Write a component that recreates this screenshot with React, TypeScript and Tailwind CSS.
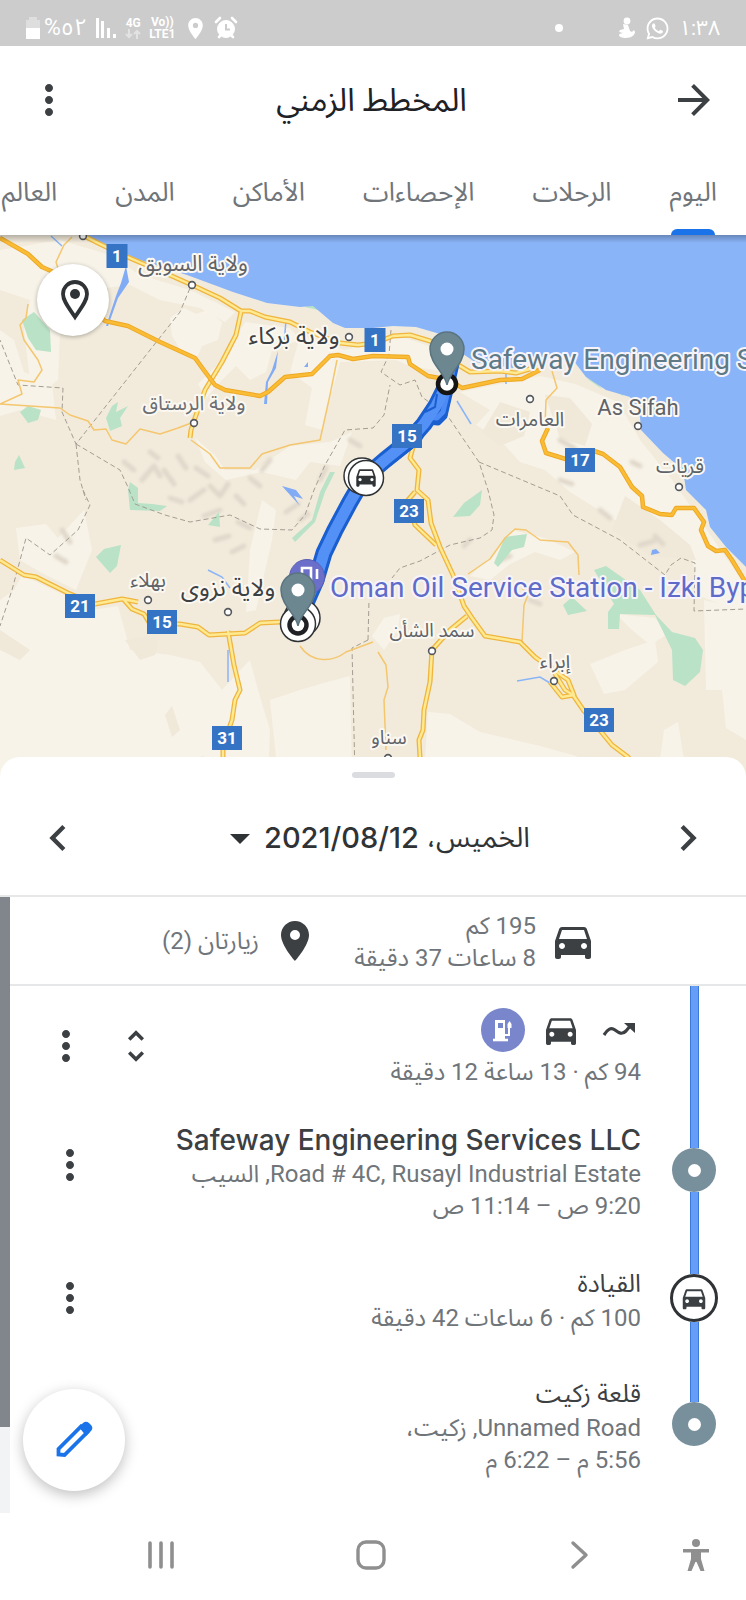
import React from 'react';
import {
  MdMoreVert, MdArrowForward, MdArrowDropDown, MdChevronLeft, MdChevronRight,
  MdDirectionsCar, MdPlace, MdUnfoldMore,
} from 'react-icons/md';
import { FaWhatsapp } from 'react-icons/fa';

const SANS = "font-['Roboto','Noto_Sans_Arabic','Noto_Sans','DejaVu_Sans',sans-serif]";

function StatusBar() {
  return (
    <div dir="ltr" className="flex h-[46px] items-center justify-between bg-[#cccccc] pl-[25px] pr-[26px] pt-[10px] text-white">
      <div className="flex items-center gap-[8px]">
        <div className="flex items-center gap-[3px]">
          <svg width="16" height="24" viewBox="0 0 16 24">
            <path d="M4 1h8v3h3v8H1V4h3z" fill="#dedede" />
            <path d="M1 12h14v11H1z" fill="#fff" />
          </svg>
          <bdi dir="ltr" className="text-[23px] leading-[24px]">%٥٢</bdi>
        </div>
        <svg width="22" height="22" viewBox="0 0 22 22" fill="#fff">
          <rect x="1" y="1" width="3" height="20" /><rect x="6" y="4" width="3" height="17" />
          <rect x="12" y="11" width="3" height="10" /><rect x="18" y="17" width="3" height="4" />
        </svg>
        <div className="flex flex-col items-center">
          <span className="text-[12px] font-bold leading-[12px]">4G</span>
          <svg width="16" height="10" viewBox="0 0 16 10" stroke="#e2e2e2" strokeWidth="2" fill="none">
            <path d="M4 0v8M1 5l3 3 3-3M12 10V2M9 5l3-3 3 3" />
          </svg>
        </div>
        <div className="flex flex-col items-center text-[12px] font-bold leading-[12px]">
          <span>Vo))</span><span>LTE1</span>
        </div>
        <div className="flex items-center gap-[6px]">
          <MdPlace size={25} />
          <svg width="24" height="24" viewBox="0 0 24 24" fill="none" stroke="#fff">
            <circle cx="12" cy="13" r="8.500" fill="#fff" />
            <path d="M2 6l4-4M22 6l-4-4M5 21l2-2M19 21l-2-2" strokeWidth="2.600" strokeLinecap="round" />
            <path d="M12 8v5.500h4" stroke="#cccccc" strokeWidth="2" />
          </svg>
        </div>
      </div>
      <div className="flex items-center gap-[9px]">
        <span className="mr-[44px] size-[8px] rounded-full bg-white" />
        <svg width="20" height="22" viewBox="0 0 20 22" fill="#fff">
          <circle cx="11" cy="4" r="3.4" />
          <path d="M7 7l5 1 2 6 2 1 2-2 1 2c0 3-4 6-9 6-4 0-7-1-7-3 0-1 2-2 4-2l-4-1 1-2 4-1z" />
        </svg>
        <FaWhatsapp size={25} />
        <bdi dir="ltr" className="text-[21px] leading-[24px]">١:٣٨</bdi>
      </div>
    </div>
  );
}

function Header() {
  return (
    <header className="flex h-[108px] items-center justify-between px-[25px] text-[#3c4043]">
      <button aria-label="رجوع" className="mr-[3px]"><MdArrowForward size={48} /></button>
      <h1 className="text-[32px] leading-[40px] text-[#202124]">المخطط الزمني</h1>
      <button aria-label="المزيد"><MdMoreVert size={48} /></button>
    </header>
  );
}

const tabs = ['اليوم', 'الرحلات', 'الإحصاءات', 'الأماكن', 'المدن', 'العالم'];

function Tabs() {
  return (
    <nav className="flex h-[81px] gap-[58px] overflow-hidden pr-[29px]">
      {tabs.map((t, i) => (
        <button key={t} className="flex shrink-0 flex-col items-center justify-between whitespace-nowrap text-[26px] text-[#70757a]">
          <span className="pt-[20px] leading-[36px]">{t}</span>
          {i === 0 && <span className="h-[6px] w-[44px] rounded-t-[6px] bg-[#1a73e8]" />}
        </button>
      ))}
    </nav>
  );
}

const doubleRoads = [
  'M82 235L100 244L125 256L165 273L192 285L220 298L241 311L250 311L265 317L290 322L310 332L340 343L358 345L375 343L393 336L410 335L430 341L445 350',
  'M241 312L236 335L222 362L205 390L195 418L191 430L190 438',
  'M0 560L24 575L36 577L68 593L95 604L122 599L138 602M124 600L132 609L144 614L150 624L180 624L198 627L209 635L245 633L260 623L280 622',
  'M228 631L234 665L240 690L235 700L232 720L223 745L223 775',
  'M415 440L410 458L419 470L417 490L428 500L431 523L440 547L453 575L464 606L472 618L485 636L520 642L535 657L552 669L565 690L573 695L584 711L612 745L628 757L640 775',
  'M415 492L408 500L415 525L436 545M552 669L568 680L574 695L562 697L550 682',
  'M467 616L450 630L432 650L430 682L424 710L423 730L419 740L421 775',
  'M455 363L470 372L500 371L516 373L540 366',
];
const primaryRoads = [
  'M0 238L28 254L42 267L60 275L105 321L128 326L160 342L195 358L203 369L215 385L225 390L260 396L268 392L285 377L312 374L330 356L338 355L353 359L373 356L408 357L410 364L428 376L450 380L462 388L500 380L522 379L540 370',
  'M548 428L542 441L546 453L572 461M594 451L603 454L620 467L632 487L642 496L643 507L660 514L672 515L676 508L694 508L704 522L701 530L708 546L716 551L725 550L732 560L746 583',
];
const minorRoads = [
  'M28 304L26 318L20 325L24 340L38 360L42 370L34 382L18 380L22 394L0 404L60 408L70 415L88 421L94 430L106 429L112 440L126 444L140 429L160 434L178 428L194 422',
  'M191 440L210 454L220 468L250 468L262 454L290 445L320 440L330 395L337 360',
  'M60 275L56 262L64 245L72 237',
  'M552 371L557 388L546 400L545 426',
  'M300 646C312 664 333 662 346 652L373 642M378 652L386 665L388 687L384 700L386 750',
  'M468 574L490 559L505 538L515 529L526 530L540 540L568 542L578 555L579 575M522 642L524 605L528 595L522 588',
];
const borders = [
  'M193 281L180 312L76 444L62 412L63 388L18 385L0 340M76 444L80 480L86 500M76 444L120 470L127 485L135 504L165 515L190 522L230 515L260 529L292 530L305 515L314 490L325 465L345 430L373 428L384 415L390 385',
  'M83 490L90 505L78 530L50 555L26 538L12 590L0 626',
  'M391 330L389 355L381 372L400 385L415 380L422 397L447 415L479 462L488 490L494 515L492 530L480 538L450 545L420 561L400 568L392 578M479 462L560 496L573 515L620 540L665 575L671 565L681 558L695 563L694 611L746 609M368 640L352 648L355 775M368 640L369 600',
];
const greens = [
  'M22 320L34 312L50 330L51 352L36 350L28 338z',
  'M20 412L28 406L41 410L38 420L28 423z', 'M15 462L19 455L25 468L14 470z',
  'M106 418L112 406L118 402L116 412L128 406L120 418L122 426L110 431z',
  'M96 557L104 549L121 545L117 566L110 573z',
  'M128 490L130 482L138 488L138 503L152 504L167 506L160 511L130 510z',
  'M208 525L219 512L220 527z', 'M320 492L330 472L335 472L325 492L315 522L295 542L292 538L312 520z',
  'M453 517L464 503L482 490L480 505L470 516z',
  'M505 537L527 534L524 547L512 550L498 567L494 563z',
  'M563 605L572 597L587 611L568 615z', 'M594 570L606 566L640 590L656 615L672 632L695 638L703 650L700 672L685 686L673 680L672 650L655 615L620 614L619 629L608 629L608 612L614 604z',
  'M586 378L596 382L602 389z', 'M305 307L313 302L318 310z', 'M612 388L620 392L624 397z',
];
const lightPatches = [
  'M0 250L60 240L110 255L140 275L190 290L235 312L225 322L200 308L160 300L130 285L90 290L60 330L58 380L42 392L30 380L24 330L30 300L0 290z',
  'M0 330L14 340L24 372L52 384L56 420L20 410L0 416z',
  'M170 318L184 308L196 314L208 310L222 322L218 340L202 346L196 360L182 352L172 336z',
  'M245 322L290 328L300 340L272 350L266 372L250 380L236 366L222 380L206 398L198 384L226 356z',
  'M300 336L345 350L400 336L440 350L446 372L410 366L396 360L340 362L330 400L322 430L305 425L312 388L290 372z',
  'M460 392L500 384L540 376L575 384L618 402L640 440L672 480L696 514L722 552L746 586L746 615L700 596L690 550L650 530L615 520L570 492L545 470L520 462L500 440L476 425L490 410z',
  'M0 600L14 590L22 575L64 595L92 610L118 606L130 650L170 655L200 662L222 690L250 660L258 690L270 730L268 776L0 776z',
  'M270 700L300 690L320 684L350 676L352 776L278 776z',
  'M16 528L46 524L58 538L84 510L92 550L76 590L40 572L20 560z',
  'M195 438L215 455L225 470L255 470L290 446L330 442L352 432L340 466L310 462L296 480L262 472L226 480L205 462z',
  'M428 712L450 714L480 732L540 746L576 756L600 776L424 776z',
  'M590 664L625 650L655 640L658 662L625 690L604 694z', 'M372 636L384 618L400 614L398 630L384 650z',
  'M470 576L492 556L512 530L545 538L575 552L560 560L535 552L510 564L490 580z',
  'M250 550L262 500L276 510L272 540L256 610L246 612z', 'M704 600L746 610L746 740L726 728L722 690L706 690z',
  'M660 760L664 730L678 722L684 760z', 'M616 614L655 618L668 634L650 645L632 630z',
];
const darkPatches = [
  'M625 496L660 520L690 545L696 560L650 556L612 530z',
  'M545 395L570 398L592 424L585 446L560 438z', 'M125 640L160 634L155 655L140 660z', 'M165 715L172 706L180 730L172 737z',
  'M500 402L530 412L524 436L500 446L482 432z', 'M0 630L30 650L20 660L0 650z', 'M192 765L202 756L226 764L226 776L196 776z',
];
const shade = 'M124 462l10 8M142 480l12-14 6 10M164 470l10 14M178 456l8 12M190 500l14-10M210 486l10 10 8-12M236 496l8 8M250 478l10 8M286 512l12-8M300 520l8-6M215 540l14-4M232 552l12-6M262 470l8-10M150 452l8 6M196 468l12 8M170 498l12 4M320 480l6-12M62 530l8 12M56 556l10 6M204 516l16-6M238 522l12 6M640 545l14-4M655 536l8 8M600 510l10 8M560 480l12 4M500 560l10-4M530 600l10 4M350 440l10 6M560 440l14 8M632 462l8 4M470 540l-6 6';
const water = [
  'M126 266L129 282L118 298L108 326L106 326L116 296L121 283z', 'M278 351L272 370L266 382L264 404L267 404L268 382L276 368z',
  'M282 486L296 490L303 499L294 496L300 506z', 'M304 367L308 362L308 367z', 'M652 550L656 549L660 553L651 555z',
];
const shields: [number, number, string, number][] = [
  [117, 256, '1', 21], [375, 340, '1', 21], [407, 436, '15', 30], [580, 460, '17', 30], [409, 511, '23', 30],
  [80, 606, '21', 30], [162, 622, '15', 30], [227, 738, '31', 30], [599, 720, '23', 30],
];
const towns = [[83, 236], [192, 285], [349, 337], [194, 423], [530, 399], [638, 426], [679, 487], [148, 600], [228, 612], [432, 651], [554, 681], [388, 758]];
const labels: [number, number, string, string, number][] = [
  [193, 271, 'ولاية السويق', '#5f6368', 22], [294, 344, 'ولاية بركاء', '#3c4043', 24], [194, 410, 'ولاية الرستاق', '#6b6e73', 20],
  [530, 426, 'العامرات', '#5f6368', 20], [680, 473, 'قريات', '#5f6368', 20], [148, 587, 'بهلاء', '#5f6368', 20],
  [228, 596, 'ولاية نزوى', '#3c4043', 24], [432, 637, 'سمد الشأن', '#5f6368', 19], [555, 668, 'إبراء', '#5f6368', 20], [389, 744, 'سناو', '#5f6368', 19],
];
const halo = { paintOrder: 'stroke' as const };

function CarGlyph({ x, y, s }: { x: number; y: number; s: number }) {
  return (
    <path
      transform={`translate(${x - 12 * s} ${y - 13 * s}) scale(${s})`}
      fill="#303336"
      d="M18.92 6.01C18.72 5.42 18.16 5 17.5 5h-11c-.66 0-1.21.42-1.42 1.01L3 12v8c0 .55.45 1 1 1h1c.55 0 1-.45 1-1v-1h12v1c0 .55.45 1 1 1h1c.55 0 1-.45 1-1v-8l-2.08-5.99zM6.5 16c-.83 0-1.5-.67-1.5-1.5S5.67 13 6.5 13s1.5.67 1.5 1.5S7.33 16 6.5 16zm11 0c-.83 0-1.5-.67-1.5-1.5s.67-1.5 1.5-1.5 1.5.67 1.5 1.5-.67 1.5-1.5 1.5zM5 11l1.5-4.5h11L19 11H5z"
    />
  );
}

function PlacePin({ x, y }: { x: number; y: number }) {
  return (
    <g transform={`translate(${x} ${y})`}>
      <path d="M0 36C-2 24-17 15-17 0a17 17 0 0 1 34 0C17 15 2 24 0 36z" fill="#6d8791" stroke="#597480" strokeWidth="1.5" />
      <circle r="6.5" fill="#fff" />
    </g>
  );
}

function MapView() {
  const route = 'M447 384L436 406L424 424L410 440L385 460L364 478L350 502L335 530L324 553L316 580L302 612';
  return (
    <div className="relative h-[541px] overflow-hidden bg-[#f2ebdc]">
      <svg className="h-full w-full" viewBox="0 235 746 541" preserveAspectRatio="xMidYMid slice" direction="ltr">
        <defs>
          <filter id="soft"><feGaussianBlur stdDeviation="1.6" /></filter>
        </defs>
        <rect y="235" width="746" height="541" fill="#f2ebdc" />
        <g fill="#f7f3e8">{lightPatches.map((d) => <path key={d} d={d} />)}</g>
        <g fill="#f0e8d8">{darkPatches.map((d) => <path key={d} d={d} />)}</g>
        <path d={shade} stroke="#e0d8ca" strokeWidth="5" fill="none" strokeLinejoin="round" strokeLinecap="round" filter="url(#soft)" />
        <g fill="#b9e2c6">{greens.map((d) => <path key={d} d={d} />)}</g>
        <path
          fill="#8ab4f8"
          d="M87 235L107 247L140 260L187 275L233 292L267 303L300 307L313 306L333 323L345 328L373 328L393 326L416 327L440 334L460 352L475 362L513 368L540 358L573 360L586 377L606 390L630 397L640 417L641 430L663 453L683 470L686 490L706 510L710 527L726 547L746 567V235z"
        />
        <g fill="#82abf5">{water.map((d) => <path key={d} d={d} />)}</g>
        <path d="M51 236L62 246M457 401L471 424M208 570L222 577L230 588M228 650V682M517 681L540 677L550 683M286 320L284 345M506 373V384" stroke="#8ab4f8" strokeWidth="1.5" fill="none" />
        <g fill="none" stroke="#a39d92" strokeDasharray="5 3">{borders.map((d) => <path key={d} d={d} />)}</g>
        <g fill="none" stroke="#f4c66e" strokeWidth="1.5" strokeLinejoin="round">{minorRoads.map((d) => <path key={d} d={d} />)}</g>
        <g fill="none" strokeLinejoin="round">
          {doubleRoads.map((d) => <path key={d} d={d} stroke="#efb53f" strokeWidth="5" />)}
          {doubleRoads.map((d) => <path key={d + 'i'} d={d} stroke="#ffe991" strokeWidth="2.4" />)}
          {primaryRoads.map((d) => <path key={d} d={d} stroke="#eda723" strokeWidth="4.5" />)}
          {primaryRoads.map((d) => <path key={d + 'i'} d={d} stroke="#fbbc35" strokeWidth="2.6" />)}
        </g>
        <g fill="none" strokeLinejoin="round">
          <path d="M456 364L444 416L438 422L428 421L418 440L385 466" stroke="#1a5fd0" strokeWidth="7" />
          <path d={route} stroke="#1a5fd0" strokeWidth="17" />
          <path d="M453 370L443 412L437 418L428 417L416 438L385 463" stroke="#4c8bf5" strokeWidth="5" />
          <path d={route} stroke="#5491f6" strokeWidth="11" />
          <path d="M425 412L435 407L437 394" stroke="#1a5fd0" strokeWidth="2" />
        </g>
        {shields.map(([x, y, t, w]) => (
          <g key={x}>
            <rect x={x - w / 2} y={y - 12} width={w} height="24" fill="#3573c4" />
            <text x={x} y={y + 6} fontSize="17" fontWeight="700" fill="#fff" textAnchor="middle">{t}</text>
          </g>
        ))}
        {towns.map(([x, y]) => <circle key={x} cx={x} cy={y} r="3.4" fill="#fff" stroke="#55585c" strokeWidth="1.6" />)}
        <g textAnchor="middle" stroke="#fbf8f1" strokeWidth="4" strokeLinejoin="round" style={halo}>
          {labels.map(([x, y, t, c, s]) => <text key={t} x={x} y={y} fill={c} fontSize={s}>{t}</text>)}
          <text x="638" y="415" fill="#5f6368" fontSize="22">As Sifah</text>
        </g>
        <circle cx="362" cy="476" r="18" fill="#fff" stroke="#303336" strokeWidth="1.5" />
        <circle cx="366" cy="478" r="17.5" fill="#fff" stroke="#303336" strokeWidth="1.5" />
        <CarGlyph x={366} y={478} s={1.08} />
        <circle cx="307" cy="577" r="17.5" fill="#6c6fc9" stroke="#5a60b8" />
        <path d="M302 568h9v14h-9zM317 569v10" stroke="#fff" strokeWidth="2.6" fill="none" />
        <circle cx="302" cy="618" r="18" fill="#fff" stroke="#303336" strokeWidth="1.5" />
        <circle cx="298" cy="624" r="17.5" fill="#fff" stroke="#303336" strokeWidth="1.5" />
        <circle cx="298" cy="625" r="8.500" fill="#fff" stroke="#202124" strokeWidth="4.5" />
        <circle cx="447" cy="384" r="9" fill="#fff" stroke="#151515" strokeWidth="4.5" />
        <PlacePin x={298} y={590} />
        <PlacePin x={447} y={349} />
        <g stroke="#f6f4fa" strokeWidth="4" strokeLinejoin="round" fontSize="28" style={halo}>
          <text x="471" y="369" fill="#5d7a86">Safeway Engineering Services LLC</text>
          <text x="330" y="597" fill="#5f6bc8">Oman Oil Service Station - Izki Bypass</text>
        </g>
      </svg>
      <div className="absolute inset-x-0 top-0 h-[8px] bg-gradient-to-b from-black/25 to-transparent" />
      <button aria-label="الموقع" className="absolute left-[37px] top-[29px] flex size-[72px] items-center justify-center rounded-full bg-white shadow-[0_1px_4px_rgba(0,0,0,0.3)]">
        <svg width="30" height="42" viewBox="0 0 30 42" className="ml-[4px]">
          <path d="M15 38C9 29 3 22 3 15a12 12 0 0 1 24 0c0 7-6 14-12 23z" fill="none" stroke="#303336" strokeWidth="3.8" />
          <circle cx="15" cy="15" r="5" fill="#303336" />
        </svg>
      </button>
    </div>
  );
}

function DateBar() {
  return (
    <div className="border-b-2 border-[#e6e7e9] pt-[15px]">
      <div className="mx-auto h-[6px] w-[43px] rounded-full bg-[#dadce0]" />
      <div className="flex h-[117px] items-center justify-between px-[32px] pt-[3px] text-[#3c4043]">
        <button aria-label="اليوم السابق"><MdChevronRight size={52} /></button>
        <button className="flex items-center text-[28px] leading-[36px] text-[#303336]">
          <span className="flex items-center gap-[8px]">
            <span>الخميس،</span>
            <bdi dir="ltr" className="font-['Inter'] text-[29px] font-medium">2021/08/12</bdi>
          </span>
          <MdArrowDropDown size={48} />
        </button>
        <button aria-label="اليوم التالي"><MdChevronLeft size={52} /></button>
      </div>
    </div>
  );
}

function Summary() {
  return (
    <div className="flex h-[89px] items-center border-b-2 border-[#e6e7e9] pr-[149px] text-[24px] leading-[32px] text-[#70757a]">
      <MdDirectionsCar size={48} className="shrink-0 text-[#3c4043]" />
      <div className="mr-[13px] w-[175px] whitespace-nowrap pt-[3px]"><p>195 كم</p><p>8 ساعات 37 دقيقة</p></div>
      <MdPlace size={48} className="mr-[42px] shrink-0 text-[#3c4043]" />
      <p className="mr-[12px] whitespace-nowrap">زيارتان (2)</p>
    </div>
  );
}

function Rail({ children, last }: { children?: React.ReactNode; last?: boolean }) {
  const seg = 'w-[9px] flex-1 border-x border-[#3b78d8] bg-[#669df6]';
  return (
    <div className="flex w-[52px] shrink-0 flex-col items-center self-stretch">
      <div className={seg} />
      {children}
      {children && (last ? <div className="flex-1" /> : <div className={seg} />)}
    </div>
  );
}

const StopDot = () => (
  <span className="flex size-[44px] items-center justify-center rounded-full bg-[#78909c]">
    <span className="size-[13px] rounded-full bg-white" />
  </span>
);
const CarDot = () => (
  <span className="flex size-[48px] items-center justify-center rounded-full border-[3px] border-[#303336] bg-white text-[#3c4043]">
    <MdDirectionsCar size={30} />
  </span>
);

function Row({ marker, title, latin, lines, more = true, last }: {
  marker: React.ReactNode; title: string; latin?: boolean; lines: string[]; more?: boolean; last?: boolean;
}) {
  return (
    <li className={`flex items-center pr-[26px] pl-[36px] ${last ? 'h-[124px]' : 'h-[128px]'}`}>
      <Rail last={last}>{marker}</Rail>
      <div className="mr-[27px] flex-1 whitespace-nowrap pt-[3px]">
        <h2 className={latin ? "font-['Inter'] text-[28px] font-medium leading-[36px] text-[#3c4043]" : 'text-[25px] leading-[36px] text-[#3c4043]'}>{title}</h2>
        {lines.map((l) => <p key={l} className="text-[24px] leading-[32px] text-[#70757a]">{l}</p>)}
      </div>
      {more && <button aria-label="المزيد" className={`text-[#3c4043] ${lines.length > 1 ? 'pb-[10px]' : ''}`}><MdMoreVert size={48} /></button>}
    </li>
  );
}

function Timeline() {
  return (
    <ol>
      <li className="flex h-[120px] items-center pr-[26px] pl-[32px] text-[#3c4043]">
        <Rail />
        <div className="mr-[27px] flex-1 pt-[8px]">
          <div className="flex h-[44px] items-center gap-[16px]">
            <svg width="44" height="20" viewBox="0 0 44 20">
              <path d="M7 15C11 9 14 7 18 10s7 5 11 1l5-6" fill="none" stroke="#3c4043" strokeWidth="3.2" />
              <path d="M27 3h11v10z" fill="#3c4043" />
            </svg>
            <MdDirectionsCar size={40} />
            <span className="flex size-[44px] items-center justify-center rounded-full bg-[#7986cb]">
              <svg width="22" height="24" viewBox="0 0 22 24" fill="none" stroke="#fff">
                <path d="M4 3h8v17H4z" fill="#fff" strokeWidth="2" />
                <path d="M6 5h5v5H6z" fill="#7986cb" stroke="none" />
                <path d="M1 22h15" strokeWidth="2.6" />
                <path d="M13 17h4V9" strokeWidth="2" />
                <path d="M15.500 10V6l2-3 2 3v4z" fill="#fff" stroke="none" />
              </svg>
            </span>
          </div>
          <p className="whitespace-nowrap text-[24px] leading-[40px] text-[#70757a]">94 كم · 13 ساعة 12 دقيقة</p>
        </div>
        <button aria-label="توسيع"><MdUnfoldMore size={42} /></button>
        <button aria-label="المزيد" className="mr-[25px]"><MdMoreVert size={48} /></button>
      </li>
      <Row marker={<StopDot />} title="Safeway Engineering Services LLC" latin lines={['Road # 4C, Rusayl Industrial Estate, السيب', '9:20 ص – 11:14 ص']} />
      <Row marker={<CarDot />} title="القيادة" lines={['100 كم · 6 ساعات 42 دقيقة']} />
      <Row marker={<StopDot />} title="قلعة زكيت" lines={['Unnamed Road, زكيت،', '5:56 م – 6:22 م']} more={false} last />
    </ol>
  );
}

function NavBar() {
  return (
    <nav dir="ltr" className="flex h-[87px] items-center pb-[3px] pr-[32px]">
      <div className="flex flex-1 items-center justify-between pl-[143px] pr-[80px]">
        <button aria-label="التطبيقات الأخيرة">
          <svg width="36" height="36" viewBox="0 0 36 36" stroke="#8f8f8f" strokeWidth="3.6" strokeLinecap="round"><path d="M7 6v24M18 6v24M29 6v24" /></svg>
        </button>
        <button aria-label="الشاشة الرئيسية">
          <svg width="36" height="36" viewBox="0 0 36 36" fill="none" stroke="#8f8f8f" strokeWidth="3.4"><rect x="5" y="5" width="26" height="26" rx="8" /></svg>
        </button>
        <button aria-label="رجوع">
          <svg width="36" height="36" viewBox="0 0 36 36" fill="none" stroke="#8f8f8f" strokeWidth="3.4" strokeLinecap="round" strokeLinejoin="round"><path d="M11 6l13 12-13 12" /></svg>
        </button>
      </div>
      <button aria-label="إمكانية الوصول">
        <svg width="36" height="36" viewBox="0 0 36 36" fill="#8f8f8f">
          <circle cx="18" cy="6" r="4" />
          <path d="M5 12h26v3.500h-8V22l3.500 12h-4L18.600 25h-1.200L13.500 34h-4L13 22v-6.500H5z" />
        </svg>
      </button>
    </nav>
  );
}

export default function App() {
  return (
    <div dir="rtl" lang="ar" className={`min-h-screen overflow-hidden bg-white ${SANS}`}>
      <StatusBar />
      <Header />
      <Tabs />
      <MapView />
      <main className="relative -mt-[19px] rounded-t-[20px] bg-white">
        <DateBar />
        <div dir="ltr" className="relative flex">
          <div className="flex w-[10px] shrink-0 flex-col bg-[#f1f3f4]">
            <div className="h-[530px] bg-[#80868b]" />
          </div>
          <div dir="rtl" className="min-w-0 flex-1 pb-[27px]">
            <Summary />
            <Timeline />
          </div>
          <button aria-label="تعديل" className="absolute bottom-[22px] left-[23px] flex size-[102px] items-center justify-center rounded-full bg-white shadow-[0_4px_14px_rgba(0,0,0,0.25)]">
            <svg width="40" height="40" viewBox="0 0 40 40">
              <path d="M4.500 34.500v-5.500L27 6.500l6 6L10.500 35z" fill="none" stroke="#1a73e8" strokeWidth="3.800" />
              <path d="M25 7l4-4a4.500 4.500 0 0 1 6 0l2 2a4.500 4.500 0 0 1 0 6l-5 5z" fill="#1a73e8" />
            </svg>
          </button>
        </div>
      </main>
      <NavBar />
    </div>
  );
}
